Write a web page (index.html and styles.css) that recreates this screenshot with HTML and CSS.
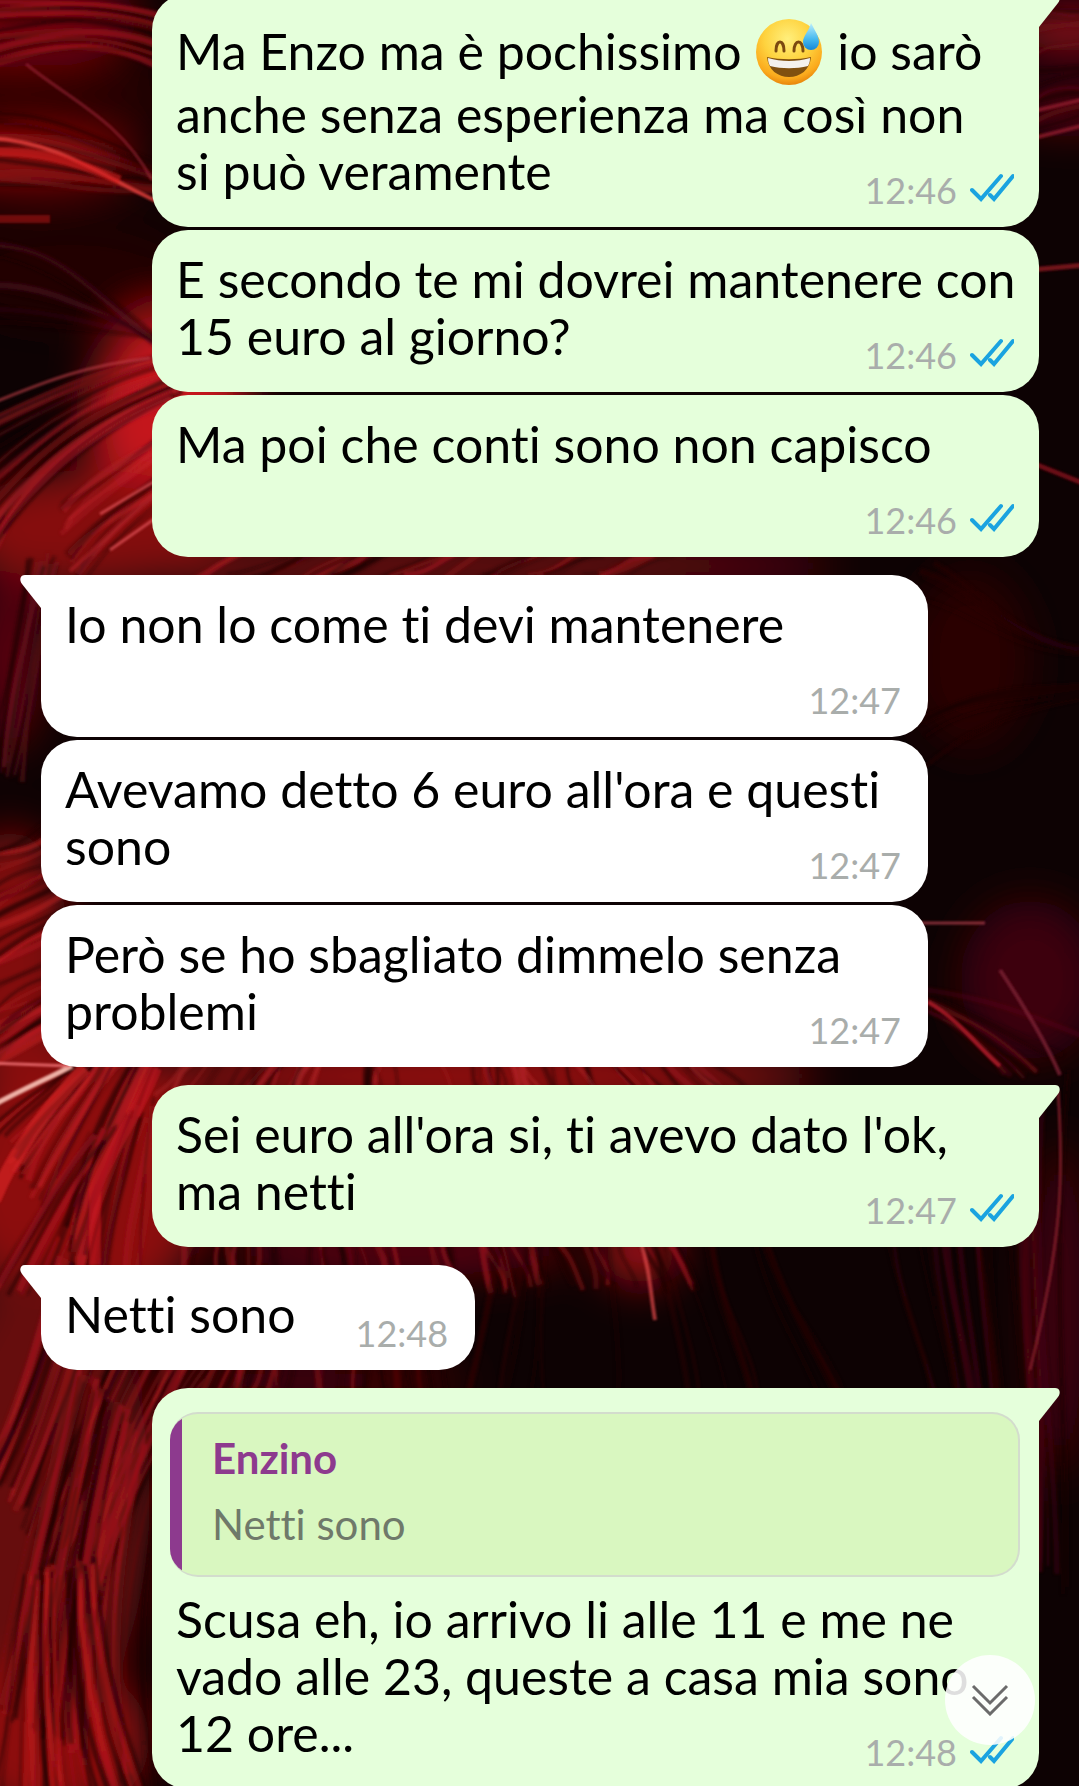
FILE: index.html
```html
<!DOCTYPE html>
<html lang="it">
<head>
    <meta charset="UTF-8">
    <meta name="viewport" content="width=device-width, initial-scale=1.0">
    <title>Chat</title>
    <link rel="stylesheet" href="styles.css">
</head>
<body>

    <!-- Wallpaper -->
    <svg class="wallpaper" viewBox="0 0 1079 1786" preserveAspectRatio="none" aria-hidden="true">
        <defs>
            <filter id="glow" x="-50%" y="-50%" width="200%" height="200%"><feGaussianBlur stdDeviation="22"/></filter>
            <filter id="soft"><feGaussianBlur stdDeviation="1.6"/></filter>
            <filter id="fine"><feGaussianBlur stdDeviation="1"/></filter>
        </defs>
        <rect width="1079" height="1786" fill="#0d0203"/>
        <g filter="url(#glow)">
            <ellipse cx="20" cy="20" rx="120" ry="50" fill="#6c0608"/>
            <ellipse cx="60" cy="95" rx="120" ry="30" fill="#2a0305"/>
            <ellipse cx="20" cy="160" rx="120" ry="26" fill="#a00d0d"/>
            <ellipse cx="70" cy="270" rx="120" ry="50" fill="#200204"/>
            <ellipse cx="170" cy="420" rx="80" ry="110" fill="#c4121b"/>
            <ellipse cx="90" cy="530" rx="130" ry="60" fill="#860b11"/>
            <ellipse cx="420" cy="566" rx="420" ry="20" fill="#7d0d12"/>
            <ellipse cx="10" cy="660" rx="30" ry="90" fill="#5e060b"/>
            <ellipse cx="10" cy="960" rx="60" ry="130" fill="#820a0f"/>
            <ellipse cx="80" cy="1180" rx="130" ry="140" fill="#8c0a0e"/>
            <ellipse cx="480" cy="1076" rx="340" ry="24" fill="#b01216"/>
            <ellipse cx="40" cy="1500" rx="110" ry="240" fill="#66070a"/>
            <ellipse cx="50" cy="1740" rx="100" ry="80" fill="#8c090b"/>
            <ellipse cx="400" cy="1250" rx="180" ry="26" fill="#5c060a"/>
            <ellipse cx="640" cy="1250" rx="36" ry="34" fill="#a80f14"/>
            <ellipse cx="300" cy="1380" rx="170" ry="16" fill="#5c060a"/>
            <ellipse cx="1070" cy="30" rx="60" ry="22" fill="#96101a"/>
            <ellipse cx="1070" cy="110" rx="60" ry="14" fill="#7a0c12"/>
            <ellipse cx="970" cy="660" rx="60" ry="90" fill="#2c0306"/>
            <ellipse cx="1030" cy="980" rx="70" ry="80" fill="#3c0408"/>
            <ellipse cx="1060" cy="1310" rx="24" ry="170" fill="#4a050c"/>
        </g>
        <g id="strands" class="strands" filter="url(#soft)"></g>
        <g class="strands" filter="url(#fine)">
            <path d="M-10 138C60 142 100 176 165 205" stroke="#e8423e" stroke-width="4" opacity=".8"/>
            <path d="M-10 152C50 150 80 165 120 180" stroke="#d51c1c" stroke-width="9" opacity=".6"/>
            <path d="M-10 219H50" stroke="#a3100e" stroke-width="8" opacity=".6"/>
            <path d="M26 64C70 100 120 120 152 180" stroke="#9d2a37" stroke-width="3" opacity=".6"/>
            <path d="M-10 404C40 384 80 366 150 358" stroke="#c04048" stroke-width="3" opacity=".6"/>
            <path d="M100 514L160 478M110 550L160 515" stroke="#e2545a" stroke-width="3" opacity=".7"/>
            <path d="M-10 1107C25 1088 45 1080 72 1066" stroke="#fbc4b8" stroke-width="5" opacity=".9"/>
            <path d="M-10 1063L70 1066" stroke="#e06265" stroke-width="3"/>
            <path d="M-6 1200C15 1150 45 1110 85 1068" stroke="#e2252a" stroke-width="14" opacity=".6"/>
            <path d="M156 1068C140 1110 110 1150 95 1190V1265" stroke="#d01a20" stroke-width="12" opacity=".5"/>
            <path d="M928 1002C960 1020 980 1050 1000 1066" stroke="#b51d2b" stroke-width="4" opacity=".8"/>
            <path d="M1000 970C1020 1000 1045 1040 1060 1075" stroke="#7c2035" stroke-width="4" opacity=".8"/>
            <path d="M920 923H985" stroke="#b2404c" stroke-width="3" opacity=".7"/>
            <path d="M1030 462L1085 484" stroke="#6c0b14" stroke-width="5"/>
            <path d="M1030 112L1085 99M1030 139L1085 125" stroke="#8f1d2b" stroke-width="4" opacity=".8"/>
            <path d="M1030 270L1085 265" stroke="#8b1620" stroke-width="5" opacity=".8"/>
            <path d="M640 1240C650 1270 650 1290 655 1320" stroke="#e04a4a" stroke-width="4" opacity=".7"/>
            <path d="M1058 1090C1064 1180 1062 1240 1030 1370" stroke="#86202d" stroke-width="3" opacity=".8"/>
        </g>
    </svg>

    <main class="chat">

        <article class="message sent first">
            Ma Enzo ma è pochissimo
            <svg class="emoji" viewBox="0 0 66 66" role="img" aria-label="Faccina che ride con sudore freddo">
                <defs>
                    <radialGradient id="face" cx=".48" cy=".3" r=".7">
                        <stop offset="0" stop-color="#ffef7c"/>
                        <stop offset=".5" stop-color="#fed33f"/>
                        <stop offset=".85" stop-color="#fbaa1d"/>
                        <stop offset="1" stop-color="#e8850b"/>
                    </radialGradient>
                    <linearGradient id="drop" x2="0" y2="1">
                        <stop offset="0" stop-color="#bdeffc"/>
                        <stop offset=".6" stop-color="#45b8ee"/>
                        <stop offset="1" stop-color="#1687d8"/>
                    </linearGradient>
                </defs>
                <circle cx="33" cy="33" r="33" fill="url(#face)"/>
                <path d="M20 32C20 20 28 20 28 32M38 32C38 20 47 20 47 32" fill="none" stroke="#7b4a10" stroke-width="3" stroke-linecap="round"/>
                <path d="M11 38C24 41 42 41 55 38C54 51 44 58 33 58S12 51 11 38Z" fill="#80500f"/>
                <path d="M12 39C25 43 41 43 54 39C54 43 53 45 52 47C40 50 26 50 14 47C13 45 12 43 12 39Z" fill="#f4f1ec"/>
                <path d="M55 4C59 12 63 17 63 23A8 8 0 0 1 47 23C47 17 53 12 55 4Z" fill="url(#drop)"/>
            </svg>
            io sarò anche senza esperienza ma così non si&nbsp;può veramente
            <div class="meta"><time>12:46</time><svg class="ticks" viewBox="0 0 44 29" role="img" aria-label="Letto"><path d="M2 17L11 26L31 3M20 22L24 26L43 3"/></svg></div>
        </article>

        <article class="message sent">
            E secondo te mi dovrei mantenere con 15 euro al giorno?
            <div class="meta"><time>12:46</time><svg class="ticks" viewBox="0 0 44 29" role="img" aria-label="Letto"><path d="M2 17L11 26L31 3M20 22L24 26L43 3"/></svg></div>
        </article>

        <article class="message sent">
            Ma poi che conti sono non capisco
            <div class="meta"><time>12:46</time><svg class="ticks" viewBox="0 0 44 29" role="img" aria-label="Letto"><path d="M2 17L11 26L31 3M20 22L24 26L43 3"/></svg></div>
        </article>

        <article class="message received first">
            Io non lo come ti devi mantenere
            <div class="meta"><time>12:47</time></div>
        </article>

        <article class="message received">
            Avevamo detto 6 euro all'ora e questi sono
            <div class="meta"><time>12:47</time></div>
        </article>

        <article class="message received">
            Però se ho sbagliato dimmelo senza problemi
            <div class="meta"><time>12:47</time></div>
        </article>

        <article class="message sent first">
            Sei euro all'ora si, ti avevo dato l'ok, ma netti
            <div class="meta"><time>12:47</time><svg class="ticks" viewBox="0 0 44 29" role="img" aria-label="Letto"><path d="M2 17L11 26L31 3M20 22L24 26L43 3"/></svg></div>
        </article>

        <article class="message received first">
            Netti sono
            <div class="meta"><time>12:48</time></div>
        </article>

        <article class="message sent first">
            <blockquote class="quote">
                <strong>Enzino</strong>
                <p>Netti sono</p>
            </blockquote>
            Scusa eh, io arrivo li alle 11 e me ne vado alle 23, queste a casa mia sono 12 ore...
            <div class="meta"><time>12:48</time><svg class="ticks" viewBox="0 0 44 29" role="img" aria-label="Letto"><path d="M2 17L11 26L31 3M20 22L24 26L43 3"/></svg></div>
        </article>

    </main>

    <button class="scroll-down" type="button" aria-label="Vai in fondo">
        <svg viewBox="0 0 40 32"><path d="M3 2L20 19L37 2M3 13L20 30L37 13"/></svg>
    </button>

    <script>
        // Each bundle fills the space between two curves (a and b) with thin strands
        const bundles = [
            { a: [-10, 5, 60, 0, 120, 0, 200, 30], b: [-10, 65, 60, 45, 110, 40, 165, 70], n: 22, c: '#a5141c' },
            { a: [-10, 110, 50, 110, 100, 140, 165, 170], b: [-10, 185, 50, 180, 100, 190, 160, 190], n: 14, c: '#8c0f14' },
            { a: [-10, 240, 50, 240, 90, 290, 160, 350], b: [-10, 330, 50, 330, 90, 330, 160, 330], n: 8, c: '#4a0d1a' },
            { a: [-10, 410, 60, 380, 100, 365, 165, 350], b: [-10, 570, 20, 500, 80, 440, 180, 400], n: 26, c: '#b01c24' },
            { a: [60, 500, 90, 470, 120, 450, 165, 420], b: [80, 590, 110, 540, 150, 520, 200, 480], n: 18, c: '#c8262f' },
            { a: [-10, 760, 10, 660, 20, 620, 30, 560], b: [20, 780, 30, 700, 36, 640, 60, 560], n: 12, c: '#7c1a26' },
            { a: [-10, 850, 20, 840, 40, 835, 60, 820], b: [-10, 1090, 20, 1070, 50, 1050, 90, 1040], n: 34, c: '#c01c24' },
            { a: [-10, 1120, 20, 1100, 50, 1080, 90, 1050], b: [100, 1290, 110, 1200, 130, 1130, 165, 1050], n: 44, c: '#c41f24' },
            { a: [-10, 1290, 20, 1240, 50, 1190, 90, 1140], b: [140, 1290, 145, 1220, 150, 1180, 160, 1100], n: 28, c: '#a8151c' },
            { a: [-10, 1460, 20, 1400, 40, 1330, 60, 1260], b: [90, 1640, 120, 1520, 170, 1430, 220, 1360], n: 48, c: '#a8181e' },
            { a: [-10, 1700, 10, 1600, 40, 1500, 70, 1360], b: [160, 1800, 140, 1700, 130, 1600, 170, 1460], n: 60, c: '#a0141a' },
            { a: [-10, 1800, 0, 1740, 0, 1700, 20, 1580], b: [160, 1800, 130, 1740, 110, 1700, 100, 1560], n: 34, c: '#b8181a' },
            { a: [150, 1400, 160, 1390, 165, 1370, 180, 1350], b: [450, 1400, 445, 1390, 442, 1370, 438, 1350], n: 36, c: '#a5161b' },
            { a: [150, 1095, 160, 1080, 170, 1070, 185, 1055], b: [760, 1095, 745, 1080, 730, 1070, 715, 1055], n: 56, c: '#b8252a' },
            { a: [150, 1290, 152, 1270, 152, 1255, 155, 1240], b: [700, 1290, 695, 1270, 685, 1255, 675, 1240], n: 56, c: '#98151b' },
            { a: [470, 1400, 480, 1350, 490, 1300, 500, 1240], b: [860, 1400, 840, 1350, 800, 1300, 780, 1240], n: 16, c: '#330609' },
            { a: [150, 580, 170, 572, 190, 560, 210, 550], b: [640, 580, 660, 572, 680, 560, 700, 550], n: 30, c: '#a8181d' },
            { a: [930, 1400, 920, 1330, 890, 1290, 880, 1240], b: [1070, 1600, 1080, 1450, 1050, 1300, 1070, 1070], n: 26, c: '#560a13' },
            { a: [927, 560, 980, 590, 1010, 640, 1090, 650], b: [920, 800, 970, 740, 1020, 720, 1090, 700], n: 8, c: '#26040a' },
            { a: [920, 990, 960, 990, 1000, 1000, 1090, 1040], b: [920, 1010, 950, 1030, 970, 1050, 985, 1090], n: 12, c: '#6e0e17' },
            { a: [1030, 10, 1050, 8, 1065, 12, 1090, 10], b: [1030, 150, 1050, 140, 1065, 135, 1090, 130], n: 14, c: '#70101a' }
        ];

        let seed = 7;
        function random() {
            seed = (seed * 16807) % 2147483647;
            return seed / 2147483647;
        }

        const strands = document.getElementById('strands');
        bundles.forEach(({ a, b, n, c }) => {
            for (let i = 0; i < n; i++) {
                const t = random();
                const p = a.map((v, k) => Math.round(v + (b[k] - v) * t + (random() - 0.5) * 14));
                const path = document.createElementNS('http://www.w3.org/2000/svg', 'path');
                path.setAttribute('d', `M${p[0]} ${p[1]}C${p.slice(2).join(' ')}`);
                // Every other strand is dark, so the bundle keeps some depth
                path.setAttribute('stroke', i % 2 ? '#1c0204' : c);
                path.setAttribute('stroke-width', (1.5 + random() * 5).toFixed(1));
                path.setAttribute('opacity', (0.2 + random() * 0.5).toFixed(2));
                strands.appendChild(path);
            }
        });
    </script>

</body>
</html>
```
FILE: styles.css
```css
/* General Reset */
* {
    box-sizing: border-box;
}

body {
    font-family: Lato, "Liberation Sans", sans-serif;
    margin: 0;
    height: 100vh;
    overflow: hidden;
    background-color: #0d0203;
    color: #000;
}

/* Wallpaper */
.wallpaper {
    position: fixed;
    inset: 0;
    width: 100%;
    height: 100%;
}

.strands {
    fill: none;
}

/* Message list, scrolled a little past its top */
.chat {
    position: relative;
    display: flex;
    flex-direction: column;
    gap: 3px;
    margin-top: -6px;
    padding: 0 40px 0 41px;
}

.message {
    position: relative;
    display: flow-root;
    max-width: calc(100% - 111px);
    padding: 21px 23px 15px 24px;
    border-radius: 36px;
    font-size: 50px;
    line-height: 57px;
    font-variant-ligatures: none;
}

.message.first:not(:first-child) {
    margin-top: 15px;
}

.sent {
    align-self: flex-end;
    background-color: #e5ffdb;
}

.received {
    align-self: flex-start;
    background-color: #fff;
}

.sent.first {
    border-top-right-radius: 0;
}

.received.first {
    border-top-left-radius: 0;
}

/* Bubble tail */
.first::before {
    content: "";
    position: absolute;
    top: 0;
    width: 42px;
    height: 33px;
    background-color: inherit;
}

.sent.first::before {
    right: -21px;
    clip-path: path("M0 0H37C42 0 43 5 40 9L21 33H0Z");
}

.received.first::before {
    left: -21px;
    clip-path: path("M42 0H5C0 0 -1 5 2 9L21 33H42Z");
}

/* Time and read ticks */
.meta {
    float: right;
    display: flex;
    align-items: flex-start;
    gap: 13px;
    margin: 25px 2px 0 60px;
    font-size: 36px;
    line-height: 44px;
    color: #a9adab;
}

.received .meta {
    margin-right: 4px;
}

.ticks {
    width: 44px;
    height: 29px;
    margin-top: 5px;
    fill: none;
    stroke: #1aa3e0;
    stroke-width: 4;
    stroke-linecap: round;
}

.emoji {
    width: 66px;
    height: 66px;
    margin: 4px 2px 1px;
    vertical-align: -16px;
}

/* Quoted message */
.quote {
    position: relative;
    overflow: hidden;
    margin: 3px -4px 14px -6px;
    padding: 11px 24px 18px 42px;
    border: 2px solid #d3dccd;
    border-left: none;
    border-radius: 28px;
    background-color: #d9f7c0;
    font-size: 42px;
    line-height: 66px;
    color: #6f796a;
}

.quote::before {
    content: "";
    position: absolute;
    inset: 0 auto 0 0;
    width: 12px;
    background-color: #8d3a8e;
}

.quote strong {
    display: block;
    color: #8d3a8e;
}

.quote p {
    margin: 0;
}

/* Scroll to bottom button */
.scroll-down {
    position: fixed;
    right: 44px;
    bottom: 41px;
    display: flex;
    align-items: center;
    justify-content: center;
    width: 90px;
    height: 90px;
    padding: 0;
    border: none;
    border-radius: 50%;
    background-color: rgba(255, 255, 255, 0.87);
    cursor: pointer;
}

.scroll-down svg {
    width: 40px;
    height: 32px;
    fill: none;
    stroke: #6b6b6b;
    stroke-width: 3;
}
```
